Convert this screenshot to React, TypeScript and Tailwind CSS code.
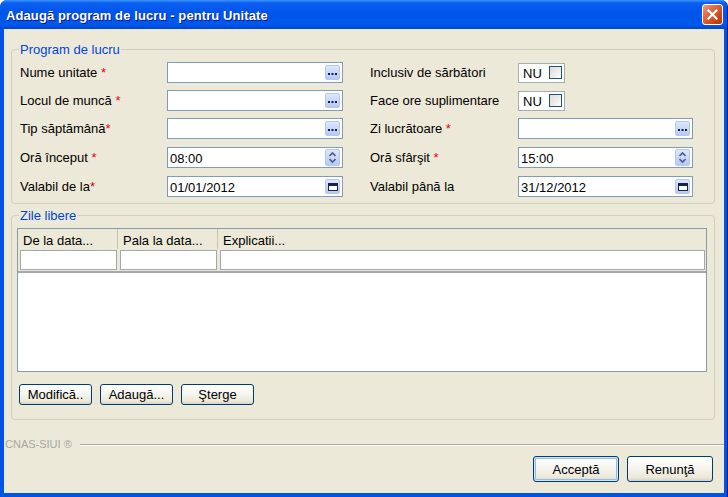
import React from "react";

const font = { fontFamily: '"Liberation Sans", Arial, sans-serif' };

function SideBtn({ children, tall }: { children: React.ReactNode; tall?: boolean }) {
  return (
    <div
      className={`w-[15px] ${tall ? "h-[17px]" : "h-[15px]"} shrink-0 rounded-[2px] border border-[#b5c7f1] bg-[linear-gradient(to_bottom,#dde7fd_0%,#c5d5fb_60%,#b6c9f6_100%)] flex flex-col items-center justify-center`}
    >
      {children}
    </div>
  );
}

function Dots() {
  return (
    <SideBtn>
      <svg width="9" height="3" viewBox="0 0 9 3" className="mt-[3px]">
        <rect x="0" y="0" width="2" height="2" fill="#101c40" />
        <rect x="3.5" y="0" width="2" height="2" fill="#101c40" />
        <rect x="7" y="0" width="2" height="2" fill="#101c40" />
      </svg>
    </SideBtn>
  );
}

function Spin() {
  return (
    <SideBtn tall>
      <svg width="7" height="13" viewBox="0 0 7 13">
        <path d="M0.5 5 L3.5 2 L6.5 5" fill="none" stroke="#4d6185" strokeWidth="1.6" />
        <path d="M0.5 8 L3.5 11 L6.5 8" fill="none" stroke="#4d6185" strokeWidth="1.6" />
      </svg>
    </SideBtn>
  );
}

function Cal() {
  return (
    <SideBtn>
      <div className="w-[10px] h-[8px] border border-[#16224a] border-t-[3px] bg-white" />
    </SideBtn>
  );
}

function Field({ value = "", kind }: { value?: string; kind: "dots" | "spin" | "cal" }) {
  return (
    <div className="h-[21px] bg-white border border-[#7f9db9] flex items-center pl-[2px] pr-[2px]">
      <span className="flex-1 text-[13px] leading-[15px] text-black pt-[2px]">{value}</span>
      {kind === "dots" ? <Dots /> : kind === "spin" ? <Spin /> : <Cal />}
    </div>
  );
}

function Label({ text, star, space = true, w }: { text: string; star?: boolean; space?: boolean; w: string }) {
  return (
    <div className={`${w} shrink-0 text-[13px] leading-[15px] text-black`}>
      {text}
      {star ? <span className="text-[#e8000b]">{space ? " *" : "*"}</span> : null}
    </div>
  );
}

function NuBox() {
  return (
    <div className="h-[20px] w-[47px] bg-white border border-[#a5acb2] flex items-center justify-between pl-[4px] pr-[2px]">
      <span className="text-[13px] leading-[15px] pt-[1px]">NU</span>
      <div className="w-[13px] h-[13px] border border-[#1c5180] bg-[linear-gradient(135deg,#dcdcd7_0%,#f0f0ea_60%,#ffffff_100%)]" />
    </div>
  );
}

function XPButton({ children, w, h, def }: { children: React.ReactNode; w: string; h: string; def?: boolean }) {
  return (
    <button
      className={`${w} ${h} rounded-[3px] border border-[#003c74] bg-[linear-gradient(to_bottom,#ffffff_0%,#f6f5f0_45%,#ece9d8_85%,#d6d0c5_100%)] text-[13px] leading-[15px] text-black flex items-center justify-center ${
        def ? "shadow-[inset_0_0_0_1px_#cee7ff,inset_0_0_0_2px_#98b8ea]" : ""
      }`}
    >
      {children}
    </button>
  );
}

function Row({ children, mt }: { children: React.ReactNode; mt: string }) {
  return <div className={`flex items-center h-[21px] ${mt}`}>{children}</div>;
}

export default function App() {
  return (
    <div className="w-[728px] h-[497px] flex flex-col bg-[#0054e3] border-r border-r-[#00138c] rounded-t-[7px] overflow-hidden" style={font}>
      {/* Title bar */}
      <div className="h-[29px] shrink-0 flex items-center justify-between pl-[6px] pr-[4px] bg-[linear-gradient(to_bottom,#3d95ff_0%,#0a5ef0_10%,#0055e8_45%,#0058ec_85%,#0044d6_100%)]">
        <span className="text-white font-bold text-[13px] leading-[15px] tracking-[0.1px] [text-shadow:1px_1px_0_#0a1883] pt-[1px]">
          Adaugă program de lucru - pentru Unitate
        </span>
        <div className="w-[21px] h-[21px] rounded-[3px] border border-white bg-[linear-gradient(135deg,#eb9f86_0%,#df6a48_35%,#cc4216_75%,#b8380f_100%)] flex items-center justify-center">
          <svg width="11" height="11" viewBox="0 0 11 11">
            <path d="M1.5 1.5 L9.5 9.5 M9.5 1.5 L1.5 9.5" stroke="white" strokeWidth="2.2" strokeLinecap="square" />
          </svg>
        </div>
      </div>

      {/* Client area */}
      <div className="flex-1 ml-[4px] mr-[3px] mb-[4px] bg-[#ece9d8] flex flex-col">
        {/* Program de lucru */}
        <fieldset className="ml-[7px] mr-[9px] mt-[13px] border border-[#d0d0bf] rounded-[4px] pb-[6px]">
          <legend className="ml-[7px] px-[1px] text-[13px] leading-[15px] text-[#0046d5]">Program de lucru</legend>
          <div className="flex flex-col pl-[8px] pt-[5px]">
            <Row mt="">
              <Label w="w-[147px]" text="Nume unitate" star />
              <div className="w-[176px]"><Field kind="dots" /></div>
              <div className="w-[27px]" />
              <Label w="w-[148px]" text="Inclusiv de sărbători" />
              <NuBox />
            </Row>
            <Row mt="mt-[7px]">
              <Label w="w-[147px]" text="Locul de muncă" star />
              <div className="w-[176px]"><Field kind="dots" /></div>
              <div className="w-[27px]" />
              <Label w="w-[148px]" text="Face ore suplimentare" />
              <NuBox />
            </Row>
            <Row mt="mt-[7px]">
              <Label w="w-[147px]" text="Tip săptămână" star space={false} />
              <div className="w-[176px]"><Field kind="dots" /></div>
              <div className="w-[27px]" />
              <Label w="w-[148px]" text="Zi lucrătoare" star />
              <div className="w-[175px]"><Field kind="dots" /></div>
            </Row>
            <Row mt="mt-[8px]">
              <Label w="w-[147px]" text="Oră început" star />
              <div className="w-[176px]"><Field kind="spin" value="08:00" /></div>
              <div className="w-[27px]" />
              <Label w="w-[148px]" text="Oră sfârşit" star />
              <div className="w-[175px]"><Field kind="spin" value="15:00" /></div>
            </Row>
            <Row mt="mt-[8px]">
              <Label w="w-[147px]" text="Valabil de la" star space={false} />
              <div className="w-[176px]"><Field kind="cal" value="01/01/2012" /></div>
              <div className="w-[27px]" />
              <Label w="w-[148px]" text="Valabil până la" />
              <div className="w-[175px]"><Field kind="cal" value="31/12/2012" /></div>
            </Row>
          </div>
        </fieldset>

        {/* Zile libere */}
        <fieldset className="ml-[7px] mr-[9px] mt-[4px] border border-[#d0d0bf] rounded-[4px] pb-[14px]">
          <legend className="ml-[7px] px-[1px] text-[13px] leading-[15px] text-[#0046d5]">Zile libere</legend>
          <div className="pl-[5px] pr-[7px] pt-[5px]">
            <div className="h-[144px] border border-[#8a99a6] bg-white flex flex-col">
              <div className="bg-[#ece9d8] border-b-2 border-[#a7a6aa]">
                <div className="h-[20px] flex text-[13px] leading-[15px]">
                  <div className="w-[100px] pl-[5px] pt-[2px] flex items-center border-r border-[#c7c5b2]">De la data...</div>
                  <div className="w-[100px] pl-[5px] pt-[2px] flex items-center border-r border-[#c7c5b2]">Pala la data...</div>
                  <div className="flex-1 pl-[5px] pt-[2px] flex items-center">Explicatii...</div>
                </div>
                <div className="h-[22px] flex items-start pt-[1px] pl-[2px] pr-[1px] gap-[3px]">
                  <div className="w-[97px] h-[20px] bg-white border border-[#a0a7ae]" />
                  <div className="w-[97px] h-[20px] bg-white border border-[#a0a7ae]" />
                  <div className="flex-1 h-[20px] bg-white border border-[#a0a7ae]" />
                </div>
              </div>
              <div className="flex-1 bg-white" />
            </div>
          </div>
          <div className="flex gap-[8px] pl-[7px] pt-[12px]">
            <XPButton w="w-[73px]" h="h-[21px]">Modifică..</XPButton>
            <XPButton w="w-[73px]" h="h-[21px]">Adaugă...</XPButton>
            <XPButton w="w-[73px]" h="h-[21px]">Şterge</XPButton>
          </div>
        </fieldset>

        {/* Footer */}
        <div className="flex-1 flex flex-col justify-between">
          <div className="flex items-center mt-[18px] pl-[1px]">
            <span className="text-[11px] leading-[13px] text-[#a8a8a0]">CNAS-SIUI ®</span>
            <div className="flex-1 ml-[8px] border-t border-[#aca899] border-b border-b-white" />
          </div>
          <div className="flex justify-end gap-[8px] pr-[11px] mb-[11px]">
            <XPButton w="w-[86px]" h="h-[26px]" def>Acceptă</XPButton>
            <XPButton w="w-[86px]" h="h-[26px]">Renunţă</XPButton>
          </div>
        </div>
      </div>
    </div>
  );
}
